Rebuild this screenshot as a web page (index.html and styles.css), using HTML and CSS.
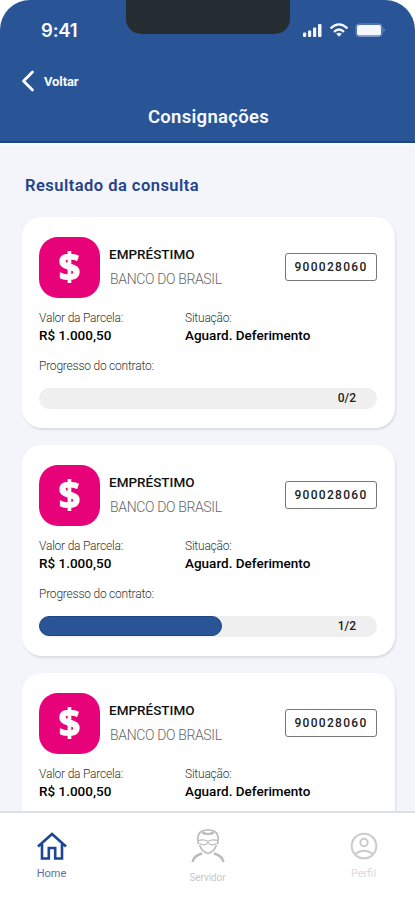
FILE: index.html
```html
<!DOCTYPE html>
<html lang="pt-BR">
<head>
<meta charset="utf-8">
<meta name="viewport" content="width=device-width, initial-scale=1">
<title>Consignações</title>
<link rel="stylesheet" href="styles.css">
</head>
<body>
<div class="app">
  <header class="header">
    <div class="notch"></div>
    <div class="status">
      <span class="time">9:41</span>
      <svg class="status-icons" width="84" height="16" viewBox="0 0 84 16" fill="#f5f7ff">
        <rect x="2" y="10.500" width="3.2" height="4.500" rx="1"/><rect x="7" y="8.500" width="3.2" height="6.500" rx="1"/><rect x="12" y="5.500" width="3.2" height="9.500" rx="1"/><rect x="17" y="2" width="3.500" height="13" rx="1"/>
        <g fill="none" stroke="#f5f7ff" stroke-width="2.300"><path d="M29.500 6.300Q38 -1.500 46.500 6.300"/><path d="M33 9.800Q38 5.300 43 9.800"/></g>
        <path d="M35.200 11.800Q38 9.500 40.800 11.800L38 14.800Z"/>
        <rect x="55" y="2" width="26" height="12.500" rx="3" fill="none" stroke="#7893c8"/>
        <rect x="56" y="3" width="24" height="10.500" rx="2"/><path d="M82.500 6q2.500 2 0 4z" fill="#7893c8"/>
      </svg>
    </div>
    <div class="back">
      <svg width="14" height="22" viewBox="0 0 14 22" fill="none" stroke="#fff" stroke-width="2.800" stroke-linecap="round" stroke-linejoin="round"><path d="M11.500 2L2.500 11L11.500 20"/></svg>
      <span>Voltar</span>
    </div>
    <h1>Consignações</h1>
  </header>
  <main class="content">
    <h2>Resultado da consulta</h2>
    <section class="card">
      <div class="top">
        <div class="tile">$</div>
        <div class="names"><div class="kind">EMPRÉSTIMO</div><div class="bank">BANCO DO BRASIL</div></div>
        <div class="code">900028060</div>
      </div>
      <div class="facts">
        <div><div class="label">Valor da Parcela:</div><div class="value amount">R$ 1.000,50</div></div>
        <div><div class="label">Situação:</div><div class="value">Aguard. Deferimento</div></div>
      </div>
      <div class="label progress-label">Progresso do contrato:</div>
      <div class="bar"><span class="count">0/2</span></div>
    </section>
    <section class="card">
      <div class="top">
        <div class="tile">$</div>
        <div class="names"><div class="kind">EMPRÉSTIMO</div><div class="bank">BANCO DO BRASIL</div></div>
        <div class="code">900028060</div>
      </div>
      <div class="facts">
        <div><div class="label">Valor da Parcela:</div><div class="value amount">R$ 1.000,50</div></div>
        <div><div class="label">Situação:</div><div class="value">Aguard. Deferimento</div></div>
      </div>
      <div class="label progress-label">Progresso do contrato:</div>
      <div class="bar"><div class="fill" style="width:54.200%"></div><span class="count">1/2</span></div>
    </section>
    <section class="card">
      <div class="top">
        <div class="tile">$</div>
        <div class="names"><div class="kind">EMPRÉSTIMO</div><div class="bank">BANCO DO BRASIL</div></div>
        <div class="code">900028060</div>
      </div>
      <div class="facts">
        <div><div class="label">Valor da Parcela:</div><div class="value amount">R$ 1.000,50</div></div>
        <div><div class="label">Situação:</div><div class="value">Aguard. Deferimento</div></div>
      </div>
    </section>
  </main>
  <nav class="tabs">
    <div class="tab home">
      <svg width="32" height="30" viewBox="0 0 32 30" fill="none" stroke="#1c4596" stroke-width="2.600"><path d="M2 14.500L16 2L30 14.500M6 12V26.500H12.800V16H19.200V26.500H26V12"/></svg>
      <span>Home</span>
    </div>
    <div class="tab server">
      <svg width="36" height="38" viewBox="0 0 36 38" fill="none" stroke="#bababa" stroke-width="1.700"><path d="M8.500 17C6 6 11 3 18 3S30 6 27.500 17"/><path d="M12 5.500Q18 8.500 24 5.500" stroke-width="2"/><path d="M9.500 18C11 22 14 25.500 18 26.500C22 25.500 25 22 26.500 18"/><path d="M8.500 13.500Q14 12 18 14.500Q22 12 27.500 13.500M9.500 16.500Q15 19.500 18 15.500Q21 19.500 26.500 16.500" stroke-width="1.200"/><path d="M2.500 35Q4 28.500 12 26.500M33.500 35Q32 28.500 24 26.500" stroke-width="2.400"/></svg>
      <span>Servidor</span>
    </div>
    <div class="tab profile">
      <svg width="28" height="28" viewBox="0 0 28 28" fill="none" stroke="#cbcbcb" stroke-width="2"><circle cx="14" cy="14" r="12.300"/><circle cx="14" cy="10.500" r="3.700"/><path d="M5 22Q14 15.500 23 22"/></svg>
      <span>Perfil</span>
    </div>
  </nav>
</div>
</body>
</html>
```
FILE: styles.css
```css
* { box-sizing: border-box; }
body { margin: 0; background: #fff; font-family: Roboto, "Liberation Sans", sans-serif; }
.app { height: 900px; overflow: hidden; display: flex; flex-direction: column; }
.header { position: relative; flex: none; height: 143px; background: #295597; border-bottom: 2px solid #1a4589; border-radius: 30px 30px 0 0; color: #f8faff; }
.notch { position: absolute; top: 0; left: 126px; width: 164px; height: 34px; background: #252d33; border-radius: 0 0 15px 15px; }
.status { display: flex; justify-content: space-between; padding: 19px 30px 0 41px; height: 42px; }
.time { font: 600 18.500px/22px Inter, sans-serif; letter-spacing: -.2px; }
.status-icons { margin-top: 3px; }
.back { display: flex; align-items: center; gap: 9px; height: 22px; margin: 28px 0 0 21px; font-size: 13px; font-weight: 700; letter-spacing: -.1px; }
.back span { margin-top: 1px; }
h1 { margin: 13px 0 0 2px; text-align: center; font-size: 18.500px; line-height: 24px; font-weight: 600; letter-spacing: .3px; }
.content { flex: 1; min-height: 0; overflow: hidden; background: #f3f5fa; padding: 30px 20px 0 22px; border-top: 2px solid #fafcff; }
h2 { margin: 0 0 20px 3px; font-size: 16.500px; line-height: 22px; font-weight: 600; letter-spacing: .47px; color: #24428c; }
.card { height: 211px; margin-bottom: 17px; padding: 20px 18px 0 17px; background: #fff; border-radius: 20px; box-shadow: 1px 2px 2px #d9dce1; }
.top { display: flex; height: 61px; }
.tile { width: 61px; height: 61px; border-radius: 19px; background: #e8027a; color: #fff; text-align: center; font-family: "Noto Sans", Roboto, sans-serif; font-size: 38px; line-height: 58px; font-weight: 900; }
.names { flex: 1; padding: 8px 0 0 9px; white-space: nowrap; }
.kind { font-size: 13.500px; line-height: 18px; font-weight: 500; color: #111; }
.bank { margin: 7px 0 0 1px; font-size: 14px; line-height: 18px; font-weight: 300; color: #666; letter-spacing: -.35px; }
.code { width: 92px; height: 28px; margin-top: 16px; border: 1px solid #777; border-radius: 3px; text-align: center; font-size: 12px; line-height: 27px; font-weight: 500; letter-spacing: 1.300px; color: #222; }
.facts { display: grid; grid-template-columns: 146px 1fr; margin-top: 12px; }
.label { font-size: 12px; line-height: 16px; font-weight: 300; color: #333; letter-spacing: -.22px; white-space: nowrap; }
.value { font-size: 13.500px; line-height: 18px; font-weight: 500; color: #000; letter-spacing: 0; white-space: nowrap; }
.progress-label { margin-top: 14px; }
.bar { position: relative; display: flex; align-items: center; justify-content: flex-end; height: 21px; margin-top: 14px; width: 338px; padding-right: 21px; border-radius: 11px; background: #efefef; }
.fill { position: absolute; left: 0; top: 0; height: 20px; border-radius: 10px; background: #295597; border: 1px solid #1d4689; }
.count { font-size: 12px; line-height: 19px; font-weight: 500; color: #222; }
.tabs { flex: none; height: 89px; border-top: 2px solid #dddfe4; background: #fff; display: grid; grid-template-columns: 103px 209px 103px; justify-items: center; }
.tab { display: flex; flex-direction: column; align-items: center; white-space: nowrap; }
.home { padding-top: 19px; color: #5b70ac; font-size: 11px; line-height: 14px; }
.home span { margin-top: 5px; }
.server { padding-top: 14px; color: #c8c8c8; font-size: 10px; line-height: 14px; letter-spacing: -.1px; }
.server span { margin-top: 6px; }
.profile { padding-top: 19px; color: #dadada; font-size: 11px; line-height: 14px; }
.profile span { margin-top: 7px; }
```
